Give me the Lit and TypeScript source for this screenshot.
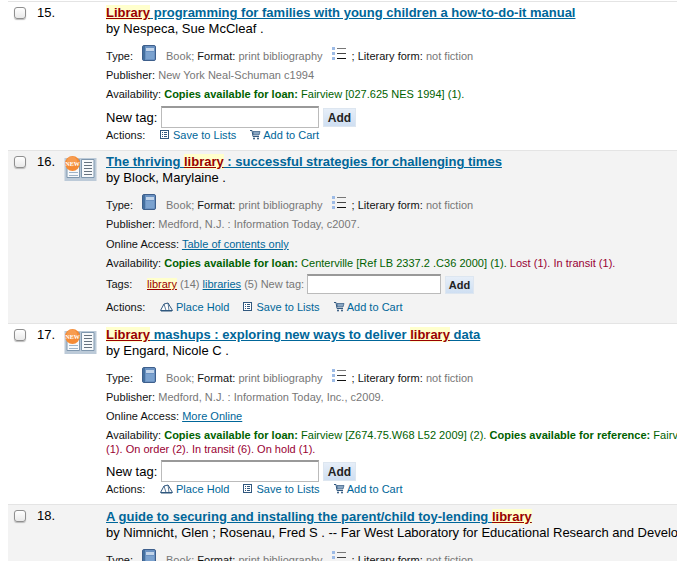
import { LitElement, html, css } from "lit";
import { customElement } from "lit/decorators.js";

const bookIcon = html`<svg class="book" width="14" height="16" viewBox="0 0 14 16"><rect x="0.5" y="0.5" width="13" height="15" rx="1.5" fill="#6b92c2" stroke="#3e5f8c"/><rect x="1" y="1" width="2" height="14" fill="#44709f"/><rect x="4" y="3" width="8" height="3" fill="#c3d5ea"/><rect x="4" y="7" width="8" height="7" fill="#7ba2cf"/></svg>`;
const listIcon = html`<svg class="list" width="14" height="14" viewBox="0 0 14 14"><rect x="0" y="0" width="3" height="3" fill="#9dbbe6"/><rect x="0" y="5" width="3" height="3" fill="#9dbbe6"/><rect x="0" y="10" width="3" height="3" fill="#9dbbe6"/><rect x="5" y="1" width="9" height="1" fill="#777"/><rect x="5" y="6" width="9" height="1" fill="#444"/><rect x="5" y="11" width="9" height="1" fill="#111"/></svg>`;
const newIcon = html`<svg class="new" width="33" height="25" viewBox="0 0 33 25"><rect x="0.5" y="2" width="32" height="23" fill="#bccad8"/><path d="M3 3.5 H15.5 V21.5 H3Z M17.5 3.5 H30 V21.5 H17.5Z" fill="#f7f9fb" stroke="#7f97ae" stroke-width="1"/><path d="M20 6.5h8M20 9.5h8M20 12.5h8M20 15.5h8M20 18.5h8" stroke="#66727e" stroke-width="1"/><path d="M5 16.5h9M5 19.5h9" stroke="#9fb4c8" stroke-width="1"/><circle cx="8.5" cy="7.5" r="7.5" fill="#f58b35"/><circle cx="8" cy="5.5" r="5" fill="#f9a862" opacity=".6"/><text x="8.5" y="9.5" font-size="6" font-weight="700" fill="#fff" text-anchor="middle" font-family="Liberation Serif, serif">NEW</text></svg>`;
const saveIcon = html`<svg class="ai" width="11" height="11" viewBox="0 0 11 11"><rect x="0.5" y="1.5" width="8" height="8" fill="#fff" stroke="#31587f"/><path d="M2 3.5h1M4 3.5h3M2 5.5h1M4 5.5h3M2 7.5h1M4 7.5h3" stroke="#31587f" stroke-width="1"/></svg>`;
const cartIcon = html`<svg class="ai" width="11" height="11" viewBox="0 0 11 11"><path d="M0 1.5h2l1 6h6" fill="none" stroke="#31587f"/><path d="M3 2.5h7l-1 3.5H3.5Z" fill="#8aa6c2" stroke="#31587f" stroke-width=".7"/><circle cx="4" cy="9.5" r="1" fill="#31587f"/><circle cx="8" cy="9.5" r="1" fill="#31587f"/></svg>`;
const holdIcon = html`<svg class="ai hi" width="13" height="10" viewBox="0 0 13 10"><path d="M0.5 8.5 L4 2 L8 1 L12.5 8.5 Z" fill="#fff" stroke="#31587f"/><path d="M4 2 L6 8.5 M8 1 L9 8.5" stroke="#31587f" stroke-width=".8"/><path d="M1 9h11" stroke="#31587f"/></svg>`;

const hl = (t: string) => html`<span class="term">${t}</span>`;

const typeRow = html`<div class="line typeline"><span class="lab">Type:</span>${bookIcon}<span class="tx"><span class="val">Book;</span> Format: <span class="val">print bibliography</span></span>${listIcon}<span class="tx">; Literary form: <span class="val">not fiction</span></span></div>`;
const tagEntry = html`<div class="newtag"><span class="nl">New tag:</span><input class="tagin" type="text" /><button class="add">Add</button></div>`;
const actions = (hold: boolean) => html`<div class="line actions"><span class="alab">Actions:</span>
  ${hold ? html`<a class="act hold">${holdIcon}<span>Place Hold</span></a>` : ""}
  <a class="act save">${saveIcon}<span>Save to Lists</span></a>
  <a class="act cart">${cartIcon}<span>Add to Cart</span></a></div>`;

@customElement("app-root")
export class AppRoot extends LitElement {
  static styles = css`
    :host { display: block; width: 677px; height: 561px; overflow: hidden; background: #fff; font-family: "Liberation Sans", Arial, sans-serif; color: #000; padding-left: 8px; box-sizing: border-box; }
    .table { width: 900px; }
    .row { display: grid; grid-template-columns: 29px 27px 42px 1fr; border-top: 1px solid #e4e4e4; box-sizing: border-box; }
    .r15 { height: 149px; margin-top: 1px; }
    .r16 { height: 173px; }
    .r17 { height: 181px; }
    .r18 { height: 120px; }
    .r18 .main { padding-top: 4px; }
    .alt { background: #f3f3f3; }
    .chk { appearance: none; margin: 5px 0 0 6px; width: 12px; height: 12px; border: 1px solid #8f8f8f; border-radius: 3px; background: linear-gradient(#fff, #e9e9e9); box-sizing: border-box; box-shadow: 0 1px 1px #bbb; }
    .num { font-size: 13px; line-height: 16px; padding-top: 3px; }
    .cover { padding-top: 5px; }
    .new { display: block; }
    .main { padding-top: 3px; min-width: 0; }
    .title { font-size: 13px; font-weight: 700; line-height: 16px; }
    .title a { color: #006699; text-decoration: underline; }
    .term { background: #ffffcc; color: #990000; text-decoration: underline; text-decoration-color: #990000; }
    .by { font-size: 13px; line-height: 16px; white-space: nowrap; }
    .line { font-size: 11px; line-height: 14px; color: #111; white-space: nowrap; letter-spacing: 0.02px; }
    .typeline { display: flex; align-items: flex-end; height: 19px; margin-top: 7px; }
    .lab { width: 36px; }
    .book { display: block; margin-bottom: 2px; }
    .tx { display: block; margin-left: 10px; }
    .list { margin: 0 0 2px 9px; display: block; }
    .list + .tx { margin-left: 6px; }
    .val { color: #777; }
    .pub { margin-top: 5px; }
    .online { margin-top: 6px; }
    .r17 .online { margin-top: 5px; }
    .online a { color: #006699; text-decoration: underline; }
    .avail { margin-top: 5px; }
    .green { color: #006100; }
    .red { color: #990033; }
    .newtag { display: flex; align-items: center; margin-top: 3px; height: 22px; font-size: 13px; }
    .r15 .newtag { margin-top: 5px; }
    .r17 .newtag { margin-top: 4px; }
    .nl { width: 55px; }
    .tagin { width: 158px; height: 22px; box-sizing: border-box; border: 1px solid #bbb; border-top: 2px solid #999; background: #fff; padding: 0; margin: 0 4px 0 0; }
    .add { height: 19px; width: 33px; padding: 0; border: 1px solid #dde6f0; background: linear-gradient(#e6eef8, #cfdff2); font: 700 12px "Liberation Sans", Arial, sans-serif; color: #222; margin-top: 1px; }
    .actions { display: flex; align-items: center; margin-top: -1px; height: 15px; }
    .alab { width: 54px; }
    .act { color: #006699; display: flex; align-items: center; margin-right: 14px; }
    .ai { display: block; margin-right: 2px; }
    .hi { margin-right: 3px; }
    .tags { display: flex; align-items: center; height: 22px; margin-top: 3px; font-size: 11px; color: #777; white-space: nowrap; }
    .tags .lab { color: #111; width: 41px; }
    .tags a { color: #006699; text-decoration: underline; }
    .tags .tagin { width: 134px; height: 20px; margin-left: 3px; margin-right: 4px; }
    .tags .add { font-size: 11px; width: 29px; height: 18px; }
    .tags a.term { margin-right: 3px; color: #990000; }
    .after-tags { margin-top: 5px; }
  `;

  render() {
    return html`<div class="table">
      <div class="row r15">
        <input class="chk" type="checkbox" /><div class="num">15.</div><div class="cover"></div>
        <div class="main">
          <div class="title"><a>${hl("Library")} programming for families with young children a how-to-do-it manual</a></div>
          <div class="by">by Nespeca, Sue McCleaf .</div>
          ${typeRow}
          <div class="line pub">Publisher: <span class="val">New York Neal-Schuman c1994</span></div>
          <div class="line avail">Availability: <span class="green"><b>Copies available for loan:</b> Fairview [027.625 NES 1994] (1).</span></div>
          ${tagEntry}
          ${actions(false)}
        </div>
      </div>
      <div class="row r16 alt">
        <input class="chk" type="checkbox" /><div class="num">16.</div><div class="cover">${newIcon}</div>
        <div class="main">
          <div class="title"><a>The thriving ${hl("library")} : successful strategies for challenging times</a></div>
          <div class="by">by Block, Marylaine .</div>
          ${typeRow}
          <div class="line pub">Publisher: <span class="val">Medford, N.J. : Information Today, c2007.</span></div>
          <div class="line online">Online Access: <a>Table of contents only</a></div>
          <div class="line avail">Availability: <span class="green"><b>Copies available for loan:</b> Centerville [Ref LB 2337.2 .C36 2000] (1).</span> <span class="red">Lost (1). In transit (1).</span></div>
          <div class="tags"><span class="lab">Tags:</span><a class="term">library</a>(14)&nbsp;<a>libraries</a>&nbsp;(5) New tag:<input class="tagin" type="text" /><button class="add">Add</button></div>
          <div class="after-tags">${actions(true)}</div>
        </div>
      </div>
      <div class="row r17">
        <input class="chk" type="checkbox" /><div class="num">17.</div><div class="cover">${newIcon}</div>
        <div class="main">
          <div class="title"><a>${hl("Library")} mashups : exploring new ways to deliver ${hl("library")} data</a></div>
          <div class="by">by Engard, Nicole C .</div>
          ${typeRow}
          <div class="line pub">Publisher: <span class="val">Medford, N.J. : Information Today, Inc., c2009.</span></div>
          <div class="line online">Online Access: <a>More Online</a></div>
          <div class="line avail">Availability: <span class="green"><b>Copies available for loan:</b> Fairview [Z674.75.W68 L52 2009] (2). <b>Copies available for reference:</b> Fairview [Z674.75.W68 L52 2009]</span><br /><span class="red">(1). On order (2). In transit (6). On hold (1).</span></div>
          ${tagEntry}
          ${actions(true)}
        </div>
      </div>
      <div class="row r18 alt">
        <input class="chk" type="checkbox" /><div class="num">18.</div><div class="cover"></div>
        <div class="main">
          <div class="title"><a>A guide to securing and installing the parent/child toy-lending ${hl("library")}</a></div>
          <div class="by">by Nimnicht, Glen ; Rosenau, Fred S . -- Far West Laboratory for Educational Research and Development</div>
          ${typeRow}
        </div>
      </div>
    </div>`;
  }
}
